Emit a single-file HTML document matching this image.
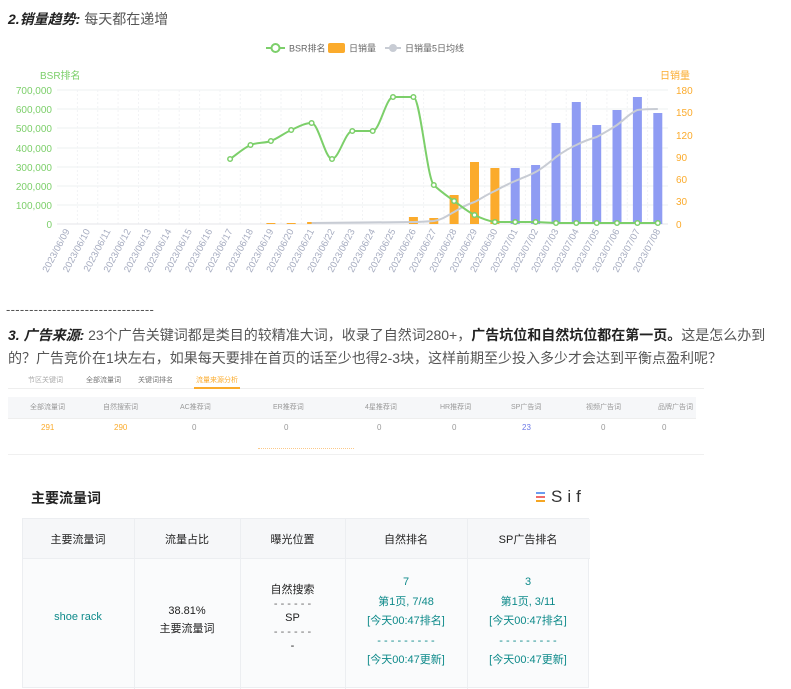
<!DOCTYPE html>
<html><head><meta charset="utf-8">
<style>
*{margin:0;padding:0;box-sizing:border-box}
body{width:791px;height:678px;overflow:hidden;background:#fff;font-family:"Liberation Sans","Noto Sans CJK SC",sans-serif;color:#444;position:relative}
.abs{position:absolute;white-space:nowrap}
.t{font-size:14px;color:#555}
.tc{color:#0e8a8a}
</style></head><body>
<div class="abs t" style="left:8px;top:9px;"><b style="font-style:italic;color:#222">2.销量趋势:</b> 每天都在递增</div>

<svg class="abs" style="left:0;top:30px" width="791" height="260" viewBox="0 30 791 260" font-family="Liberation Sans, Noto Sans CJK SC, sans-serif">
<line x1="266" y1="48" x2="285" y2="48" stroke="#7ccf6a" stroke-width="2"/>
<circle cx="275.5" cy="48" r="4" fill="#fff" stroke="#7ccf6a" stroke-width="2"/>
<text x="289" y="51.5" font-size="9" fill="#666">BSR排名</text>
<rect x="328" y="43" width="17" height="10" rx="2" fill="#fbab2c"/>
<text x="349" y="51.5" font-size="9" fill="#666">日销量</text>
<line x1="385" y1="48" x2="401" y2="48" stroke="#c8ccd4" stroke-width="2"/>
<circle cx="393" cy="48" r="4" fill="#c8ccd4"/>
<text x="405" y="51.5" font-size="9" fill="#666">日销量5日均线</text>
<text x="40" y="79" font-size="10" fill="#7ccf6a">BSR排名</text>
<text x="660" y="79" font-size="10" fill="#fbab2c">日销量</text>
<g stroke="#eef0f2" stroke-width="1">
<line x1="57" y1="90" x2="668" y2="90"/><line x1="57" y1="109" x2="668" y2="109"/><line x1="57" y1="128" x2="668" y2="128"/><line x1="57" y1="148" x2="668" y2="148"/><line x1="57" y1="167" x2="668" y2="167"/><line x1="57" y1="186" x2="668" y2="186"/><line x1="57" y1="205" x2="668" y2="205"/>
</g>
<g stroke="#f2f3f5" stroke-dasharray="2,2">
<line x1="77.4" y1="90" x2="77.4" y2="224"/><line x1="97.7" y1="90" x2="97.7" y2="224"/><line x1="118.1" y1="90" x2="118.1" y2="224"/><line x1="138.5" y1="90" x2="138.5" y2="224"/><line x1="158.8" y1="90" x2="158.8" y2="224"/><line x1="179.2" y1="90" x2="179.2" y2="224"/><line x1="199.6" y1="90" x2="199.6" y2="224"/><line x1="220" y1="90" x2="220" y2="224"/><line x1="240.3" y1="90" x2="240.3" y2="224"/><line x1="260.7" y1="90" x2="260.7" y2="224"/><line x1="281" y1="90" x2="281" y2="224"/><line x1="301.4" y1="90" x2="301.4" y2="224"/><line x1="321.8" y1="90" x2="321.8" y2="224"/><line x1="342.2" y1="90" x2="342.2" y2="224"/><line x1="362.5" y1="90" x2="362.5" y2="224"/><line x1="382.9" y1="90" x2="382.9" y2="224"/><line x1="403.3" y1="90" x2="403.3" y2="224"/><line x1="423.6" y1="90" x2="423.6" y2="224"/><line x1="444" y1="90" x2="444" y2="224"/><line x1="464.4" y1="90" x2="464.4" y2="224"/><line x1="484.7" y1="90" x2="484.7" y2="224"/><line x1="505" y1="90" x2="505" y2="224"/><line x1="525.4" y1="90" x2="525.4" y2="224"/><line x1="545.8" y1="90" x2="545.8" y2="224"/><line x1="566.2" y1="90" x2="566.2" y2="224"/><line x1="586.5" y1="90" x2="586.5" y2="224"/><line x1="606.9" y1="90" x2="606.9" y2="224"/><line x1="627.3" y1="90" x2="627.3" y2="224"/><line x1="647.6" y1="90" x2="647.6" y2="224"/>
</g>
<line x1="57" y1="224" x2="668" y2="224" stroke="#e4e6ea"/>
<g font-size="10" fill="#7ccf6a" text-anchor="end">
<text x="52" y="94">700,000</text><text x="52" y="113">600,000</text><text x="52" y="132">500,000</text><text x="52" y="152">400,000</text><text x="52" y="171">300,000</text><text x="52" y="190">200,000</text><text x="52" y="209">100,000</text><text x="52" y="228">0</text>
</g>
<g font-size="10" fill="#fbab2c">
<text x="676" y="94">180</text><text x="676" y="116">150</text><text x="676" y="139">120</text><text x="676" y="161">90</text><text x="676" y="183">60</text><text x="676" y="205">30</text><text x="676" y="228">0</text>
</g>
<g fill="#fbab2c">
<rect x="266.4" y="223" width="9" height="1"/><rect x="286.7" y="223" width="9" height="1"/><rect x="307.1" y="222" width="9" height="2"/>
<rect x="408.9" y="217" width="9" height="7"/><rect x="429.3" y="218" width="9" height="6"/>
<rect x="449.6" y="195" width="9" height="29"/><rect x="470" y="162" width="9" height="62"/><rect x="490.4" y="168" width="9" height="56"/>
</g>
<g fill="#8f9cf3">
<rect x="510.7" y="168" width="9" height="56"/><rect x="531.1" y="165" width="9" height="59"/><rect x="551.5" y="123" width="9" height="101"/><rect x="571.8" y="102" width="9" height="122"/><rect x="592.2" y="125" width="9" height="99"/><rect x="612.5" y="110" width="9" height="114"/><rect x="632.9" y="97" width="9" height="127"/><rect x="653.3" y="113" width="9" height="111"/>
</g>
<path d="M311.6,223 L413.4,222 C420,222 427,221.5 433.8,221 C442,220 448,215 454.1,212 C462,207 468,204 474.5,202 C482,198 488,194 494.9,191 C502,187 508,184 515.2,181 C522,178 528,176 535.6,172 C543,168 550,162 556,157 C563,152 569,148 576.3,145 C584,141 590,139 596.7,137 C604,133 611,129 617,125 C624,120 630,113 637.4,110 C644,109 650,109 657.8,109" fill="none" stroke="#c8ccd4" stroke-width="2"/>
<path d="M230.1,159 C236.9,154.3 243.7,148 250.5,145 C257.3,142 264.1,143.5 270.9,141 C277.7,138.5 284.4,133 291.2,130 C298,127 304.8,123 311.6,123 C318.4,123 325.2,159 332,159 C338.8,159 345.5,131 352.3,131 L372.7,131 C379.5,131 386.2,97 393,97 L413.4,97 C420.2,97 427,178.3 433.8,185 C440.6,191.7 447.3,196 454.1,201 C460.9,206 467.7,211.7 474.5,215 C481.3,218.3 488.1,221 494.9,222 L535.6,222 L556,223 L657.8,223" fill="none" stroke="#7ccf6a" stroke-width="2"/>
<g fill="#fff" stroke="#7ccf6a" stroke-width="1.5">
<circle cx="230.1" cy="159" r="2.3"/><circle cx="250.5" cy="145" r="2.3"/><circle cx="270.9" cy="141" r="2.3"/><circle cx="291.2" cy="130" r="2.3"/><circle cx="311.6" cy="123" r="2.3"/><circle cx="332" cy="159" r="2.3"/><circle cx="352.3" cy="131" r="2.3"/><circle cx="372.7" cy="131" r="2.3"/><circle cx="393" cy="97" r="2.3"/><circle cx="413.4" cy="97" r="2.3"/><circle cx="433.8" cy="185" r="2.3"/><circle cx="454.1" cy="201" r="2.3"/><circle cx="474.5" cy="215" r="2.3"/><circle cx="494.9" cy="222" r="2.3"/><circle cx="515.2" cy="222" r="2.3"/><circle cx="535.6" cy="222" r="2.3"/><circle cx="556" cy="223" r="2.3"/><circle cx="576.3" cy="223" r="2.3"/><circle cx="596.7" cy="223" r="2.3"/><circle cx="617" cy="223" r="2.3"/><circle cx="637.4" cy="223" r="2.3"/><circle cx="657.8" cy="223" r="2.3"/>
</g>
<g font-size="9.5" fill="#a6acc0" text-anchor="end">
<text transform="translate(70,231) rotate(-62)">2023/06/09</text>
<text transform="translate(90.4,231) rotate(-62)">2023/06/10</text>
<text transform="translate(110.8,231) rotate(-62)">2023/06/11</text>
<text transform="translate(131.1,231) rotate(-62)">2023/06/12</text>
<text transform="translate(151.5,231) rotate(-62)">2023/06/13</text>
<text transform="translate(171.8,231) rotate(-62)">2023/06/14</text>
<text transform="translate(192.2,231) rotate(-62)">2023/06/15</text>
<text transform="translate(212.6,231) rotate(-62)">2023/06/16</text>
<text transform="translate(232.9,231) rotate(-62)">2023/06/17</text>
<text transform="translate(253.3,231) rotate(-62)">2023/06/18</text>
<text transform="translate(273.7,231) rotate(-62)">2023/06/19</text>
<text transform="translate(294,231) rotate(-62)">2023/06/20</text>
<text transform="translate(314.4,231) rotate(-62)">2023/06/21</text>
<text transform="translate(334.8,231) rotate(-62)">2023/06/22</text>
<text transform="translate(355.1,231) rotate(-62)">2023/06/23</text>
<text transform="translate(375.5,231) rotate(-62)">2023/06/24</text>
<text transform="translate(395.8,231) rotate(-62)">2023/06/25</text>
<text transform="translate(416.2,231) rotate(-62)">2023/06/26</text>
<text transform="translate(436.6,231) rotate(-62)">2023/06/27</text>
<text transform="translate(456.9,231) rotate(-62)">2023/06/28</text>
<text transform="translate(477.3,231) rotate(-62)">2023/06/29</text>
<text transform="translate(497.7,231) rotate(-62)">2023/06/30</text>
<text transform="translate(518,231) rotate(-62)">2023/07/01</text>
<text transform="translate(538.4,231) rotate(-62)">2023/07/02</text>
<text transform="translate(558.8,231) rotate(-62)">2023/07/03</text>
<text transform="translate(579.1,231) rotate(-62)">2023/07/04</text>
<text transform="translate(599.5,231) rotate(-62)">2023/07/05</text>
<text transform="translate(619.8,231) rotate(-62)">2023/07/06</text>
<text transform="translate(640.2,231) rotate(-62)">2023/07/07</text>
<text transform="translate(660.6,231) rotate(-62)">2023/07/08</text>
</g>
</svg>

<div class="abs" style="left:6px;top:302px;font-size:13px;color:#555;letter-spacing:0.3px">--------------------------------</div>
<div class="abs t" style="left:8px;top:324px;line-height:23px;white-space:normal;width:780px"><b style="font-style:italic;color:#222">3. 广告来源:</b> 23个广告关键词都是类目的较精准大词，收录了自然词280+，<b style="color:#222">广告坑位和自然坑位都在第一页。</b>这是怎么办到的？广告竞价在1块左右，如果每天要排在首页的话至少也得2-3块，这样前期至少投入多少才会达到平衡点盈利呢？</div>

<div class="abs" style="left:8px;top:373px;width:696px;height:82px;background:#fff;border-bottom:1px solid #f0f0f0">
 <div style="position:absolute;left:0;top:0;width:696px;height:16px;border-bottom:1px solid #eee;font-size:7px;color:#aaa">
  <span style="position:absolute;left:20px;top:2px">节区关键词</span><span style="position:absolute;left:78px;top:2px;color:#777">全部流量词</span><span style="position:absolute;left:130px;top:2px;color:#777">关键词排名</span><span style="position:absolute;left:188px;top:2px;color:#fbab2c">流量来源分析</span>
  <div style="position:absolute;left:186px;top:14px;width:46px;height:2px;background:#fbab2c"></div>
 </div>
 <div style="position:absolute;left:0;top:24px;width:688px;height:22px;background:#f6f7f9;border-bottom:1px solid #eee"></div>
 <div style="position:absolute;left:0;top:24px;width:688px;font-size:7px;color:#999;line-height:22px">
  <span style="position:absolute;left:22px">全部流量词</span><span style="position:absolute;left:95px">自然搜索词</span><span style="position:absolute;left:172px">AC推荐词</span><span style="position:absolute;left:265px">ER推荐词</span><span style="position:absolute;left:357px">4星推荐词</span><span style="position:absolute;left:432px">HR推荐词</span><span style="position:absolute;left:503px">SP广告词</span><span style="position:absolute;left:578px">视频广告词</span><span style="position:absolute;left:650px">品牌广告词</span>
 </div>
 <div style="position:absolute;left:0;top:48px;width:688px;font-size:8px;color:#999;line-height:14px">
  <span style="position:absolute;left:33px;color:#fbab2c">291</span><span style="position:absolute;left:106px;color:#fbab2c">290</span><span style="position:absolute;left:184px">0</span><span style="position:absolute;left:276px">0</span><span style="position:absolute;left:369px">0</span><span style="position:absolute;left:444px">0</span><span style="position:absolute;left:514px;color:#6b78e6">23</span><span style="position:absolute;left:593px">0</span><span style="position:absolute;left:654px">0</span>
 </div>
 <div style="position:absolute;left:250px;top:75px;width:96px;height:2px;border-top:1px dotted #fbc98a"></div>
</div>

<div class="abs" style="left:31px;top:488px;font-size:14px;font-weight:bold;color:#222">主要流量词</div>
<div class="abs" style="left:536px;top:492px;width:9px;height:12px">
 <div style="height:2px;background:#6a9cf0;margin-bottom:2px"></div><div style="height:2px;background:#ef6b6b;margin-bottom:2px"></div><div style="height:2px;background:#f5a623"></div>
</div>
<div class="abs" style="left:551px;top:487px;font-size:17px;color:#333;letter-spacing:5px">Sif</div>

<div class="abs" style="left:22px;top:518px;width:567px;height:170px;background:#fafbfc;border:1px solid #eceef1">
 <div style="position:absolute;left:0;top:0;width:567px;height:40px;background:#f6f7f9;border-bottom:1px solid #eceef1"></div>
 <div style="position:absolute;left:111px;top:0;width:1px;height:170px;background:#eceef1"></div>
 <div style="position:absolute;left:217px;top:0;width:1px;height:170px;background:#eceef1"></div>
 <div style="position:absolute;left:322px;top:0;width:1px;height:170px;background:#eceef1"></div>
 <div style="position:absolute;left:444px;top:0;width:1px;height:170px;background:#eceef1"></div>
</div>
<div style="font-size:11px;color:#222">
 <div class="abs" style="left:22px;width:112px;top:531px;text-align:center">主要流量词</div>
 <div class="abs" style="left:134px;width:106px;top:531px;text-align:center">流量占比</div>
 <div class="abs" style="left:240px;width:105px;top:531px;text-align:center">曝光位置</div>
 <div class="abs" style="left:345px;width:122px;top:531px;text-align:center">自然排名</div>
 <div class="abs" style="left:467px;width:122px;top:531px;text-align:center">SP广告排名</div>

 <div class="abs tc" style="left:22px;width:112px;top:611px;text-align:center">shoe rack</div>
 <div class="abs" style="left:134px;width:106px;top:602px;text-align:center;line-height:18px">38.81%<br>主要流量词</div>
 <div class="abs" style="left:240px;width:105px;top:583px;text-align:center;line-height:14px">自然搜索<br><span style="color:#666">- - - - - -</span><br>SP<br><span style="color:#666">- - - - - -</span><br>-</div>
 <div class="abs tc" style="left:345px;width:122px;top:573px;text-align:center;line-height:19.5px">7<br>第1页, 7/48<br>[今天00:47排名]<br>- - - - - - - - -<br>[今天00:47更新]</div>
 <div class="abs tc" style="left:467px;width:122px;top:573px;text-align:center;line-height:19.5px">3<br>第1页, 3/11<br>[今天00:47排名]<br>- - - - - - - - -<br>[今天00:47更新]</div>
</div>
</body></html>
